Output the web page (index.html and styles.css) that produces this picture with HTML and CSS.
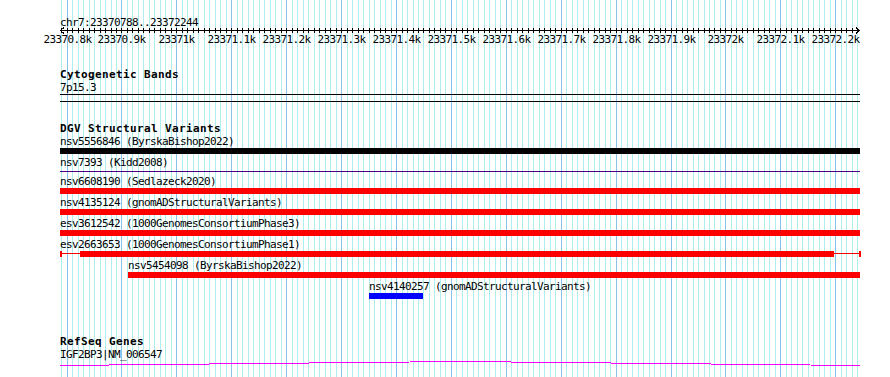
FILE: index.html
```html
<!DOCTYPE html>
<html lang="en">
<head>
    <meta charset="UTF-8">
    <title>chr7:23370788..23372244</title>
    <link rel="stylesheet" href="styles.css">
</head>
<body>
    <div class="panel">
        <svg class="grid" id="grid" width="890" height="377" shape-rendering="crispEdges"></svg>

        <div class="ruler">
            <div class="ruler-title">chr7:23370788..23372244</div>
            <svg class="axis" id="axis" width="810" height="22" shape-rendering="crispEdges"></svg>
        </div>

        <div class="track cyto">
            <div class="track-title">Cytogenetic Bands</div>
            <div class="label">7p15.3</div>
            <div class="band"></div>
        </div>

        <div class="track dgv">
            <div class="track-title">DGV Structural Variants</div>

            <div class="feature" style="margin-left:0;width:800px">
                <div class="label">nsv5556846 (ByrskaBishop2022)</div>
                <div class="bar black"></div>
            </div>
            <div class="feature" style="margin-left:0;width:800px">
                <div class="label">nsv7393 (Kidd2008)</div>
                <div class="bar thin"></div>
            </div>
            <div class="feature" style="margin-left:0;width:800px">
                <div class="label">nsv6608190 (Sedlazeck2020)</div>
                <div class="bar red"></div>
            </div>
            <div class="feature" style="margin-left:0;width:800px">
                <div class="label">nsv4135124 (gnomADStructuralVariants)</div>
                <div class="bar red"></div>
            </div>
            <div class="feature" style="margin-left:0;width:800px">
                <div class="label">esv3612542 (1000GenomesConsortiumPhase3)</div>
                <div class="bar red"></div>
            </div>
            <div class="feature" style="margin-left:0;width:801px">
                <div class="label">esv2663653 (1000GenomesConsortiumPhase1)</div>
                <div class="bar whiskered">
                    <span class="cap"></span>
                    <span class="stem" style="width:18px"></span>
                    <span class="core" style="width:754px"></span>
                    <span class="stem" style="width:25px"></span>
                    <span class="cap"></span>
                </div>
            </div>
            <div class="feature" style="margin-left:68px;width:732px">
                <div class="label">nsv5454098 (ByrskaBishop2022)</div>
                <div class="bar red"></div>
            </div>
            <div class="feature" style="margin-left:309px;width:54px">
                <div class="label">nsv4140257 (gnomADStructuralVariants)</div>
                <div class="bar blue"></div>
            </div>
        </div>

        <div class="track genes">
            <div class="track-title">RefSeq Genes</div>
            <div class="label">IGF2BP3|NM_006547</div>
            <svg class="gene" width="801" height="6" shape-rendering="crispEdges">
                <polyline points="0,4.5 400,0.5 800,4.5" fill="none" stroke="#ff00ff" stroke-width="1"/>
            </svg>
        </div>
    </div>

    <script>
        const start = 23370788;
        const end = 23372244;
        const left = 60;
        const scale = 800 / (end - start + 1);
        const NS = 'http://www.w3.org/2000/svg';

        function px(bp) {
            return Math.round(left + (bp - start) * scale);
        }

        function add(parent, tag, attrs) {
            const el = document.createElementNS(NS, tag);
            for (const k in attrs) el.setAttribute(k, attrs[k]);
            parent.appendChild(el);
            return el;
        }

        // grid lines every 10bp, darker every 100bp
        const grid = document.getElementById('grid');
        for (let bp = Math.ceil(start / 10) * 10; bp <= end; bp += 10) {
            const major = bp % 100 === 0;
            add(grid, 'rect', {
                x: px(bp), y: 0, width: 1, height: 377,
                fill: major ? '#87c4ec' : '#aeeeee'
            });
        }

        // ruler: axis, ticks, arrows and labels
        const axis = document.getElementById('axis');
        add(axis, 'rect', { x: 0, y: 2, width: 800, height: 1, fill: '#000' });
        for (let bp = Math.ceil(start / 10) * 10; bp <= end; bp += 10) {
            add(axis, 'rect', { x: px(bp) - left, y: 0, width: 1, height: 5, fill: '#000' });
            if (bp % 100 === 0) {
                const t = add(axis, 'text', { x: px(bp) - left + 0.5, y: 15, 'text-anchor': 'middle' });
                t.textContent = (bp / 1000) + 'k';
            }
        }
        add(axis, 'path', { d: 'M4 -0.5 L0.5 2.5 L4 5.5', fill: 'none', stroke: '#000' });
        add(axis, 'path', { d: 'M796 -0.5 L799.5 2.5 L796 5.5', fill: 'none', stroke: '#000' });
    </script>
</body>
</html>
```

FILE: styles.css
```css
* {
    margin: 0;
    padding: 0;
    box-sizing: border-box;
}

body {
    background: #fff;
    color: #000;
    font-family: "DejaVu Sans Mono", "Liberation Mono", monospace;
    font-size: 11px;
    letter-spacing: -0.62px;
}

.panel {
    position: relative;
    z-index: 0;
    width: 890px;
    height: 377px;
    padding: 17px 0 0 60px;
    overflow: hidden;
    background: #fff;
}

.grid {
    position: absolute;
    top: 0;
    left: 0;
    z-index: -1;
}

.ruler-title {
    line-height: 11px;
    height: 11px;
    white-space: nowrap;
}

.axis {
    display: block;
    overflow: visible;
}

.axis text {
    font-size: 11px;
    letter-spacing: -0.62px;
}

.track-title {
    font-weight: bold;
    letter-spacing: 0.38px;
    line-height: 12px;
    white-space: nowrap;
}

.label {
    line-height: 13px;
    white-space: nowrap;
}

/* cytogenetic band */
.cyto {
    margin-top: 19px;
}

.band {
    width: 800px;
    height: 8px;
    border-top: 1px solid #000;
    border-bottom: 1px solid #000;
}

/* structural variants */
.dgv {
    margin-top: 20px;
}

.dgv .track-title {
    line-height: 13px;
}

.feature {
    margin-bottom: 2px;
}

.bar {
    height: 6px;
}

.bar.black { background: #000; }
.bar.red { background: #ff0000; }
.bar.blue { background: #0000ff; }

.bar.thin {
    height: 1px;
    margin: 2px 0 3px;
    background: #4b0082;
}

.bar.whiskered {
    display: flex;
    align-items: flex-start;
}

.whiskered .cap {
    width: 2px;
    height: 6px;
    background: #ff0000;
}

.whiskered .stem {
    height: 1px;
    margin-top: 2px;
    background: #ff0000;
}

.whiskered .core {
    height: 6px;
    background: #ff0000;
}

/* genes */
.genes {
    margin-top: 37px;
}

.gene {
    display: block;
}
```
